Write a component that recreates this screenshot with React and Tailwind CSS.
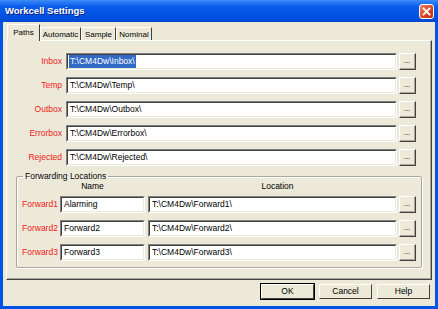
import React from 'react';

const PATHS = [
  { label: 'Inbox', value: 'T:\\CM4Dw\\Inbox\\', selected: true },
  { label: 'Temp', value: 'T:\\CM4Dw\\Temp\\' },
  { label: 'Outbox', value: 'T:\\CM4Dw\\Outbox\\' },
  { label: 'Errorbox', value: 'T:\\CM4Dw\\Errorbox\\' },
  { label: 'Rejected', value: 'T:\\CM4Dw\\Rejected\\' },
];

const FORWARDS = [
  { label: 'Forward1', name: 'Alarming', loc: 'T:\\CM4Dw\\Forward1\\' },
  { label: 'Forward2', name: 'Forward2', loc: 'T:\\CM4Dw\\Forward2\\' },
  { label: 'Forward3', name: 'Forward3', loc: 'T:\\CM4Dw\\Forward3\\' },
];

function Field({ value, selected, className = '' }) {
  return (
    <div className={`h-[17px] border-t border-l border-[#808080] border-b border-r border-b-white border-r-white ${className}`}>
      <div className="h-full bg-white border-t border-l border-[#404040] border-b border-r border-b-[#ECE9D8] border-r-[#ECE9D8] flex items-center pl-[1px] overflow-hidden whitespace-nowrap">
        <span className={selected ? 'bg-[#316AC5] text-white px-[1px]' : 'px-[1px]'}>{value}</span>
      </div>
    </div>
  );
}

function Browse() {
  return (
    <div className="w-[17px] h-[17px] ml-[2px] border-t border-l border-white border-b border-r border-b-[#404040] border-r-[#404040]">
      <div className="h-full border-b border-r border-[#ACA899] flex items-end justify-center pb-[3px] text-[8px] leading-none">...</div>
    </div>
  );
}

function Button({ children, isDefault }) {
  return (
    <div className={`w-[55px] h-[17px] ${isDefault ? 'border border-black' : 'border border-transparent'}`}>
      <div className="h-full border-t border-l border-white border-b border-r border-b-[#404040] border-r-[#404040] flex items-center justify-center">
        {children}
      </div>
    </div>
  );
}

function Tab({ children, active, w }) {
  return active ? (
    <div className={`${w} h-[17px] -mb-px relative z-10 bg-[#ECE9D8] border-t border-l border-white border-r border-r-[#404040] flex items-center justify-center`}>
      {children}
    </div>
  ) : (
    <div className={`${w} h-[14px] mt-[3px] border-t border-l border-white border-r border-r-[#404040] flex items-center justify-center`}>
      {children}
    </div>
  );
}

export default function App() {
  return (
    <div className="w-[438px] h-[309px] bg-[#0054E3] flex flex-col font-['Liberation_Sans',Arial,sans-serif] text-[8.5px] text-black">
      <div className="h-[22px] shrink-0 flex items-center justify-between pl-[5px] pr-[4px] bg-[linear-gradient(#3C8CF8,#0A5CEC_30%,#0050E0_80%,#0046D0)]">
        <span className="text-white font-bold text-[9.5px] [text-shadow:1px_1px_0_#0A1E80]">Workcell Settings</span>
        <div className="w-[15px] h-[15px] rounded-[3px] border border-white bg-[linear-gradient(135deg,#F0826A,#D8401E_60%,#C03010)] flex items-center justify-center">
          <svg width="9" height="9" viewBox="0 0 9 9">
            <path d="M1.5 1.5L7.5 7.5M7.5 1.5L1.5 7.5" stroke="white" strokeWidth="1.8" strokeLinecap="square" />
          </svg>
        </div>
      </div>
      <div className="flex-1 mx-[3px] mb-[3px] bg-[#ECE9D8] flex flex-col px-[3px] pt-[2px]">
        <div className="flex h-[16px] pl-[1px] text-[8px]">
          <Tab active w="w-[33px]">Paths</Tab>
          <Tab w="w-[41px]">Automatic</Tab>
          <Tab w="w-[35px]">Sample</Tab>
          <Tab w="w-[36px]">Nominal</Tab>
        </div>
        <div className="w-[426px] h-[240px] border-t border-l border-white border-b border-r border-b-[#404040] border-r-[#404040]">
          <div className="h-full border-b border-r border-[#ACA899] pt-[12px] pl-[9px]">
            <div className="flex flex-col gap-[7px]">
              {PATHS.map((p) => (
                <div key={p.label} className="flex items-center">
                  <div className="w-[50px] text-right text-[#F02020] pr-[4px]">{p.label}</div>
                  <Field value={p.value} selected={p.selected} className="w-[331px]" />
                  <Browse />
                </div>
              ))}
            </div>
            <fieldset className="mt-[6px] w-[404px] h-[96px] border border-[#ACA899] rounded-[2px] shadow-[inset_1px_1px_0_white,1px_1px_0_white] px-[5px]">
              <legend className="ml-[1px] px-[2px] leading-none">Forwarding Locations</legend>
              <div className="flex h-[12px] items-end">
                <div className="w-[38px]" />
                <div className="w-[85px] text-center pr-[20px]">Name</div>
                <div className="w-[3px]" />
                <div className="w-[249px] text-center pl-[10px]">Location</div>
              </div>
              <div className="flex flex-col gap-[7px] mt-[3px]">
                {FORWARDS.map((f) => (
                  <div key={f.label} className="flex items-center">
                    <div className="w-[38px] text-[#F02020]">{f.label}</div>
                    <Field value={f.name} className="w-[85px]" />
                    <div className="w-[3px]" />
                    <Field value={f.loc} className="w-[249px]" />
                    <Browse />
                  </div>
                ))}
              </div>
            </fieldset>
          </div>
        </div>
        <div className="flex justify-end gap-[3px] mt-[3px] pr-[1px]">
          <Button isDefault>OK</Button>
          <Button>Cancel</Button>
          <Button>Help</Button>
        </div>
      </div>
    </div>
  );
}
